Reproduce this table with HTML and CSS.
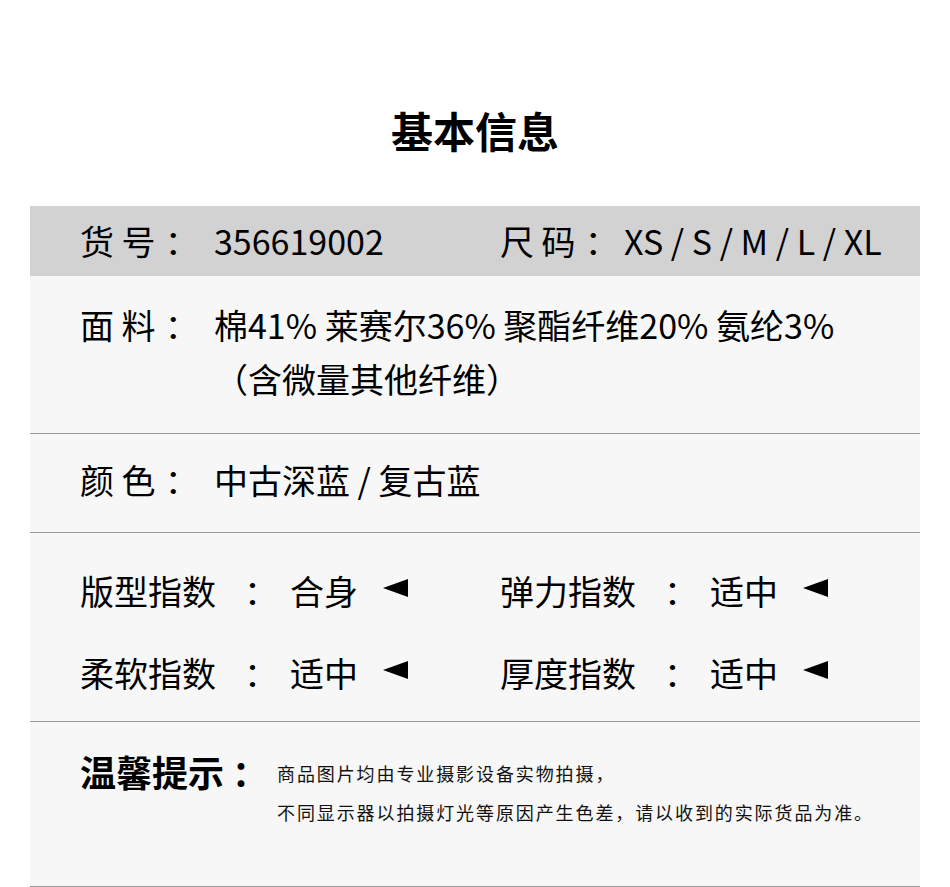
FILE: index.html
```html
<!DOCTYPE html>
<html lang="zh-CN">
<head>
<meta charset="utf-8">
<title>基本信息</title>
<link rel="stylesheet" href="styles.css">
</head>
<body>
<main class="page">
  <h1 class="title">基本信息</h1>
  <section class="panel">
    <div class="row row-head">
      <div class="pair">
        <span class="label">货 号<span class="colon">：</span></span>
        <span class="value">356619002</span>
      </div>
      <div class="pair pair-size">
        <span class="label-s">尺 码<span class="colon">：</span></span>
        <span class="value">XS / S / M / L / XL</span>
      </div>
    </div>
    <div class="row row-fabric">
      <span class="label">面 料<span class="colon">：</span></span>
      <div class="value">
        <div>棉41% 莱赛尔36% 聚酯纤维20% 氨纶3%</div>
        <div class="sub">（含微量其他纤维）</div>
      </div>
    </div>
    <div class="row row-color">
      <span class="label">颜 色<span class="colon">：</span></span>
      <span class="value">中古深蓝 / 复古蓝</span>
    </div>
    <div class="row row-index">
      <div class="idx">
        <span class="idx-name">版型指数</span><span class="idx-colon">：</span><span class="idx-val">合身</span>
        <svg class="arrow" viewBox="0 0 25 18" width="25" height="18"><polygon points="0,9 25,0 25,18" fill="#000"/></svg>
      </div>
      <div class="idx">
        <span class="idx-name">弹力指数</span><span class="idx-colon">：</span><span class="idx-val">适中</span>
        <svg class="arrow" viewBox="0 0 25 18" width="25" height="18"><polygon points="0,9 25,0 25,18" fill="#000"/></svg>
      </div>
      <div class="idx">
        <span class="idx-name">柔软指数</span><span class="idx-colon">：</span><span class="idx-val">适中</span>
        <svg class="arrow" viewBox="0 0 25 18" width="25" height="18"><polygon points="0,9 25,0 25,18" fill="#000"/></svg>
      </div>
      <div class="idx">
        <span class="idx-name">厚度指数</span><span class="idx-colon">：</span><span class="idx-val">适中</span>
        <svg class="arrow" viewBox="0 0 25 18" width="25" height="18"><polygon points="0,9 25,0 25,18" fill="#000"/></svg>
      </div>
    </div>
    <div class="row row-tip">
      <span class="tip-label">温馨提示<span class="tip-colon">：</span></span>
      <div class="tip-text">
        <p>商品图片均由专业摄影设备实物拍摄，</p>
        <p>不同显示器以拍摄灯光等原因产生色差，请以收到的实际货品为准。</p>
      </div>
    </div>
  </section>
</main>
</body>
</html>
```

FILE: styles.css
```css
* { box-sizing: border-box; }

html, body {
  margin: 0;
  padding: 0;
  background: #ffffff;
}

body {
  font-family: "Noto Sans CJK SC", "Noto Sans", sans-serif;
  color: #000000;
  width: 950px;
  height: 887px;
  overflow: hidden;
}

.page {
  padding: 0 30px;
}

.title {
  margin: 0;
  padding-top: 102px;
  height: 206px;
  text-align: center;
  font-size: 42px;
  font-weight: 700;
  line-height: 56px;
  color: #000;
}

.panel {
  background: #f7f7f7;
}

.row {
  border-bottom: 1px solid #9a9a9a;
  padding-left: 50px;
  font-size: 34px;
  line-height: 54px;
}

.row-head {
  background: #d2d2d2;
  border-bottom: none;
  height: 70px;
  display: flex;
  align-items: center;
}

.pair {
  display: flex;
  width: 420px;
}

.label {
  width: 134px;
  flex: none;
  white-space: pre;
}

.label-s {
  width: 124px;
  flex: none;
  white-space: pre;
}

.colon {
  margin-left: 9px;
}

.row-fabric {
  display: flex;
  height: 158px;
  padding-top: 22px;
}

.row-color {
  display: flex;
  height: 99px;
  padding-top: 19px;
}

.row-index {
  height: 189px;
  padding-top: 31px;
  display: grid;
  grid-template-columns: 420px 420px;
  grid-auto-rows: 54px;
  align-content: start;
  row-gap: 28px;
}

.idx {
  display: flex;
  align-items: center;
  height: 54px;
}

.idx-name {
  width: 160px;
  white-space: nowrap;
}

.idx-colon {
  width: 50px;
  padding-left: 4px;
}

.idx-val {
  width: 93px;
  white-space: nowrap;
}

.arrow {
  margin-top: -6px;
}

.row-tip {
  height: 165px;
  display: flex;
  padding-top: 26px;
}

.tip-label {
  font-size: 36px;
  font-weight: 700;
  line-height: 46px;
  width: 197px;
  flex: none;
  white-space: nowrap;
}

.tip-colon {
  margin-left: 8px;
}

.tip-text {
  font-size: 18px;
  color: #111;
  letter-spacing: 1.9px;
  padding-top: 6px;
}

.tip-text p {
  margin: 0;
  line-height: 39px;
  white-space: nowrap;
}
```
